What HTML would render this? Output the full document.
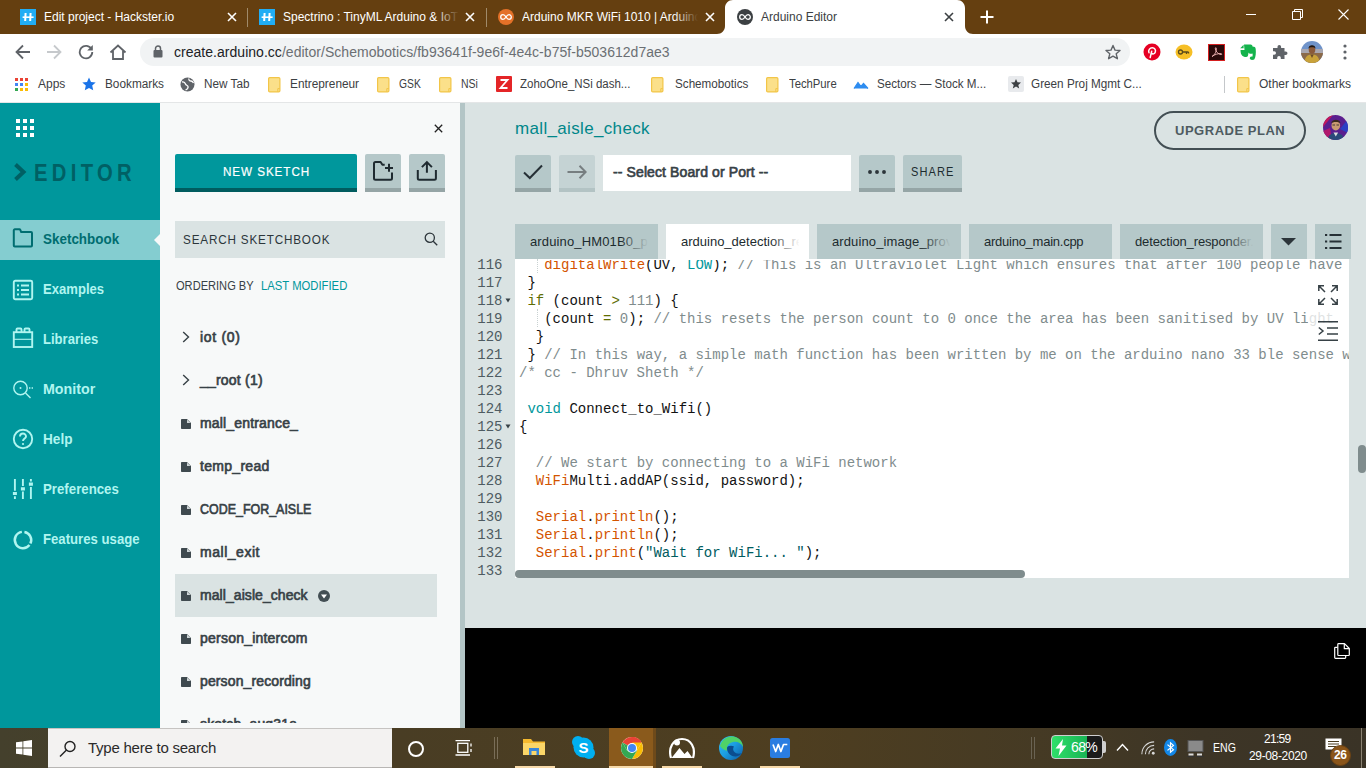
<!DOCTYPE html>
<html><head><meta charset="utf-8"><title>Arduino Editor</title>
<style>
*{box-sizing:border-box;margin:0;padding:0}
html,body{width:1366px;height:768px;overflow:hidden;background:#fff;font-family:"Liberation Sans",sans-serif;}
.a{position:absolute}
.t{position:absolute;white-space:nowrap;line-height:1}
#tabbar{left:0;top:0;width:1366px;height:34px;background:#653f10}
#toolbar{left:0;top:34px;width:1366px;height:36px;background:#fff}
#bmbar{left:0;top:70px;width:1366px;height:33px;background:#fff;border-bottom:1px solid #e4e6e7}
#page{left:0;top:103px;width:1366px;height:625px;background:#dae3e3;overflow:hidden}
#side{left:0;top:0;width:160px;height:625px;background:#00979c}
#panel{left:160px;top:0;width:300px;height:625px;background:#f7f9f9;overflow:hidden}
#split{left:460px;top:0;width:5px;height:625px;background:#b3c5c6}
#taskbar{left:0;top:728px;width:1366px;height:40px;background:linear-gradient(90deg,#44402c 0%,#493d24 29%,#4e3e20 58%,#453a24 76%,#3d3526 88%,#3a3326 100%)}
.tabtxt{font-size:12px;color:#fff;top:11px}
.bm{font-size:12px;color:#3c4043;top:78px;transform-origin:0 50%}
.nav{font-size:15px;font-weight:bold;color:#b0f5f0;transform-origin:0 50%}
.li{font-size:14px;font-weight:normal;color:#374146;-webkit-text-stroke:0.650px #374146;transform-origin:0 50%}
.btn{background:#b5c8c9;border-bottom:3px solid #95a5a6;border-radius:2px 2px 0 0}
.etab{top:121px;height:35px;background:#b5c8c9;font-size:13px;color:#1c2b2e;letter-spacing:-0.130px}
.etab .fd{position:absolute;right:0;top:0;width:30px;height:34px;background:linear-gradient(90deg,rgba(181,200,201,0),#b5c8c9 95%)}
.etab b{position:absolute;left:15px;top:0;width:120px;height:34px;overflow:hidden;font-weight:normal}
.etab span{position:absolute;left:0;top:11px;white-space:nowrap;line-height:1}
#code{left:515px;top:156px;width:834px;height:319px;background:#fff;overflow:hidden}
#gutter{left:465px;top:148px;width:50px;height:330px;overflow:hidden}
pre{font-family:"Liberation Mono",monospace;font-size:14px;line-height:18px;white-space:pre}
#gutter pre{color:#4e5b61;text-align:right;width:37.500px;position:absolute;left:0;top:5px}
#code pre{position:absolute;left:4px;top:-3px;color:#111}
.c{color:#7f8c8d}.k{color:#d35400}.b{color:#00979c}.n{color:#7f8c8d}.o{color:#5e6d03}.s{color:#005c5f}
</style></head><body>

<!-- ============ CHROME TAB BAR ============ -->
<div class="a" id="tabbar">
 <!-- tab1 -->
 <svg class="a" style="left:20px;top:9px" width="16" height="16" viewBox="0 0 16 16"><rect width="16" height="16" fill="#21adf4"/><path d="M5.600 4v8M10.600 4v8" stroke="#fff" stroke-width="2" fill="none" transform="skewX(-3) translate(0.2 0)"/><path d="M2.600 8.200h11" stroke="#fff" stroke-width="1.600"/></svg>
 <div class="t tabtxt" style="left:44px">Edit project - Hackster.io</div>
 <svg class="a" style="left:227px;top:12px" width="10" height="10" viewBox="0 0 10 10"><path d="M1 1l8 8M9 1l-8 8" stroke="#fff" stroke-width="1.6"/></svg>
 <div class="a" style="left:247px;top:8px;width:1px;height:19px;background:#a08a6a"></div>
 <!-- tab2 -->
 <svg class="a" style="left:259px;top:9px" width="16" height="16" viewBox="0 0 16 16"><rect width="16" height="16" fill="#21adf4"/><path d="M5.600 4v8M10.600 4v8" stroke="#fff" stroke-width="2" fill="none" transform="skewX(-3) translate(0.2 0)"/><path d="M2.600 8.200h11" stroke="#fff" stroke-width="1.600"/></svg>
 <div class="a" style="left:283px;top:0;width:176px;height:34px;overflow:hidden"><div class="t tabtxt" style="left:0">Spectrino : TinyML Arduino &amp; IoT</div><div class="a" style="right:0;top:0;width:24px;height:34px;background:linear-gradient(90deg,rgba(101,63,16,0),#653f10)"></div></div>
 <svg class="a" style="left:465px;top:12px" width="10" height="10" viewBox="0 0 10 10"><path d="M1 1l8 8M9 1l-8 8" stroke="#fff" stroke-width="1.6"/></svg>
 <div class="a" style="left:486px;top:8px;width:1px;height:19px;background:#a08a6a"></div>
 <!-- tab3 -->
 <svg class="a" style="left:498px;top:9px" width="16" height="16" viewBox="0 0 16 16"><circle cx="8" cy="8" r="8" fill="#e47128"/><path d="M8 8c-1-1.6-1.9-2.3-3-2.3a2.3 2.3 0 000 4.6c1.100 0 2-.7 3-2.300s1.900-2.300 3-2.300a2.300 2.300 0 010 4.600c-1.100 0-2-.7-3-2.300z" fill="none" stroke="#fff" stroke-width="1.3"/></svg>
 <div class="a" style="left:522px;top:0;width:176px;height:34px;overflow:hidden"><div class="t tabtxt" style="left:0">Arduino MKR WiFi 1010 | Arduino</div><div class="a" style="right:0;top:0;width:24px;height:34px;background:linear-gradient(90deg,rgba(101,63,16,0),#653f10)"></div></div>
 <svg class="a" style="left:705px;top:12px" width="10" height="10" viewBox="0 0 10 10"><path d="M1 1l8 8M9 1l-8 8" stroke="#fff" stroke-width="1.6"/></svg>
 <!-- active tab -->
 <svg class="a" style="left:717px;top:0" width="256" height="34" viewBox="0 0 256 34"><path d="M0 34c4.500 0 8-3.500 8-8V8c0-4.500 3.500-8 8-8h224c4.500 0 8 3.500 8 8v18c0 4.500 3.500 8 8 8z" fill="#fff"/></svg>
 <svg class="a" style="left:737px;top:9px" width="16" height="16" viewBox="0 0 16 16"><circle cx="8" cy="8" r="8" fill="#3c4043"/><path d="M8 8c-1-1.600-1.900-2.300-3-2.300a2.300 2.300 0 000 4.600c1.100 0 2-.7 3-2.300s1.900-2.300 3-2.300a2.300 2.300 0 010 4.600c-1.100 0-2-.7-3-2.300z" fill="none" stroke="#fff" stroke-width="1.300"/></svg>
 <div class="t tabtxt" style="left:761px;color:#3c4043">Arduino Editor</div>
 <svg class="a" style="left:944px;top:12px" width="10" height="10" viewBox="0 0 10 10"><path d="M1 1l8 8M9 1l-8 8" stroke="#3c4043" stroke-width="1.600"/></svg>
 <!-- new tab -->
 <svg class="a" style="left:980px;top:10px" width="14" height="14" viewBox="0 0 14 14"><path d="M7 0.500v13M0.500 7h13" stroke="#fff" stroke-width="2"/></svg>
 <!-- window controls -->
 <svg class="a" style="left:1246px;top:14px" width="10" height="2"><rect width="10" height="1" y="0" fill="#fff"/></svg>
 <svg class="a" style="left:1292px;top:9px" width="11" height="11" viewBox="0 0 11 11"><path d="M0.500 2.500h8v8h-8z M2.500 2.500v-2h8v8h-2" fill="none" stroke="#fff" stroke-width="1"/></svg>
 <svg class="a" style="left:1338px;top:9px" width="11" height="11" viewBox="0 0 11 11"><path d="M0.500 0.500l10 10M10.500 0.500l-10 10" stroke="#fff" stroke-width="1.100"/></svg>
</div>
<div class="a" id="toolbar">
 <!-- back -->
 <svg class="a" style="left:15px;top:10px" width="16" height="16" viewBox="0 0 16 16"><path d="M15 8H2M8 1.500L1.500 8 8 14.500" fill="none" stroke="#5f6368" stroke-width="1.800"/></svg>
 <svg class="a" style="left:46px;top:10px" width="16" height="16" viewBox="0 0 16 16"><path d="M1 8h13M8 1.500L14.500 8 8 14.500" fill="none" stroke="#c6c9cc" stroke-width="1.800"/></svg>
 <svg class="a" style="left:78px;top:10px" width="16" height="16" viewBox="0 0 16 16"><path d="M13.600 5.200A6.300 6.300 0 1014.300 8" fill="none" stroke="#5f6368" stroke-width="1.800"/><path d="M14.800 1v5.600H9.200z" fill="#5f6368"/></svg>
 <svg class="a" style="left:109px;top:9px" width="18" height="18" viewBox="0 0 18 18"><path d="M1.500 9.500L9 2.500l7.500 7M4 8v8h10V8" fill="none" stroke="#5f6368" stroke-width="1.800"/></svg>
 <!-- url pill -->
 <div class="a" style="left:140px;top:4px;width:990px;height:28px;border-radius:14px;background:#f1f3f4"></div>
 <svg class="a" style="left:153px;top:11px" width="10" height="13" viewBox="0 0 10 13"><rect x="0.500" y="5" width="9" height="7.500" rx="1" fill="#5f6368"/><path d="M2.500 5.500V3.500a2.500 2.500 0 015 0v2" fill="none" stroke="#5f6368" stroke-width="1.500"/></svg>
 <div class="t" style="left:174px;top:11px;font-size:14px;color:#202124;letter-spacing:0.030px">create.arduino.cc<span style="color:#6b6f73">/editor/Schemobotics/fb93641f-9e6f-4e4c-b75f-b503612d7ae3</span></div>
 <!-- star -->
 <svg class="a" style="left:1105px;top:10px" width="16" height="16" viewBox="0 0 16 16"><path d="M8 1.500l2 4.600 5 .4-3.800 3.300 1.200 4.900L8 12.100l-4.400 2.600 1.200-4.900L1 6.500l5-.4z" fill="none" stroke="#5f6368" stroke-width="1.400" stroke-linejoin="round"/></svg>
 <!-- pinterest -->
 <svg class="a" style="left:1143px;top:9px" width="18" height="18" viewBox="0 0 18 18"><circle cx="9" cy="9" r="8.500" fill="#e60023"/><path d="M7.200 14.500l1.500-6.300M6 9.800c-1.200-2.600.8-5 3.300-5 2.400 0 3.700 2 3 4.200-.6 2-2.700 2.600-3.700 1.200" fill="none" stroke="#fff" stroke-width="1.500" stroke-linecap="round"/></svg>
 <!-- key ext -->
 <svg class="a" style="left:1175px;top:10px" width="18" height="16" viewBox="0 0 18 16"><ellipse cx="9" cy="8" rx="8.500" ry="7.500" fill="#f6bf26"/><circle cx="5.500" cy="8" r="2" fill="none" stroke="#5a4a1a" stroke-width="1.300"/><path d="M7.500 8h6M11.500 8v2M13.500 8v1.500" stroke="#5a4a1a" stroke-width="1.300"/></svg>
 <!-- adobe -->
 <svg class="a" style="left:1208px;top:10px" width="17" height="17" viewBox="0 0 17 17"><rect x="0.500" y="0.500" width="16" height="16" fill="#2a0a0a" stroke="#d51f1f" stroke-width="1"/><path d="M4 12.500c3-1.500 4.800-5.500 4.300-8.300-.2-.9-1.200-.6-1 .6.500 2.800 3 5.500 5.700 5.800 1 .1 1-.9 0-1-3-.2-6.500 1-9 2.900z" fill="none" stroke="#f4b8b8" stroke-width="0.900"/></svg>
 <!-- evernote -->
 <svg class="a" style="left:1239px;top:8px" width="18" height="20" viewBox="0 0 18 20"><path d="M5 2.500h6.500c1.500 0 2 1 2 2 2 .2 3 .6 3.200 2.500.4 4 0 8-1.200 10-.8 1.200-3.500 1.200-4.500 0-.6-.9 0-2.500 1.500-2.500h1c.2-1.500.2-2 0-3-2 .800-3.500.2-4-1-.4 3-.5 4.500-2.500 4.500-2.500 0-5.500-1-5.500-7h4z" fill="#14b34c"/><path d="M4.600 2.800L1.200 6.200h3.400z" fill="#14b34c"/></svg>
 <!-- puzzle -->
 <svg class="a" style="left:1271px;top:10px" width="17" height="17" viewBox="0 0 17 17"><path d="M6.500 2.800a1.800 1.800 0 013.600 0V4h3.400v3.400h1.200a1.800 1.800 0 010 3.600h-1.200V15H9.800v-1.200a1.800 1.800 0 00-3.600 0V15H2v-4.200h1.200a1.800 1.800 0 000-3.600H2V4h4.500z" fill="#5f6368"/></svg>
 <!-- avatar -->
 <svg class="a" style="left:1301px;top:7px" width="22" height="22" viewBox="0 0 22 22"><defs><clipPath id="av1"><circle cx="11" cy="11" r="11"/></clipPath></defs><g clip-path="url(#av1)"><rect width="22" height="22" fill="#6f93c9"/><rect x="0" y="8" width="22" height="6" fill="#a9a7b0"/><rect x="0" y="12" width="22" height="10" fill="#8b6a4a"/><path d="M3.500 22c0-6 3-8.500 7.500-8.500s7.500 2.500 7.500 8.500z" fill="#c9a23a"/><path d="M9.200 13.500l1.800 3.500 1.800-3.500z" fill="#6a4a2a"/><ellipse cx="11" cy="8.800" rx="3.300" ry="4" fill="#8a5a3a"/><path d="M7.500 7.500c-.3-4.500 7.300-4.500 7 0-.8-1.600-6.200-1.600-7 0z" fill="#1e1612"/></g></svg>
 <!-- menu -->
 <svg class="a" style="left:1343px;top:10px" width="4" height="16" viewBox="0 0 4 16"><circle cx="2" cy="2" r="1.600" fill="#5f6368"/><circle cx="2" cy="8" r="1.600" fill="#5f6368"/><circle cx="2" cy="14" r="1.600" fill="#5f6368"/></svg>
</div>
<div class="a" id="bmbar"></div>
<!-- bookmarks -->
<svg class="a" style="left:15px;top:78px" width="14" height="14" viewBox="0 0 14 14"><g><rect x="0" y="0" width="3" height="3" fill="#ea4335"/><rect x="5" y="0" width="3" height="3" fill="#ea4335"/><rect x="10" y="0" width="3" height="3" fill="#ea4335"/><rect x="0" y="5" width="3" height="3" fill="#4285f4"/><rect x="5" y="5" width="3" height="3" fill="#4285f4"/><rect x="10" y="5" width="3" height="3" fill="#fbbc04"/><rect x="0" y="10" width="3" height="3" fill="#34a853"/><rect x="5" y="10" width="3" height="3" fill="#fbbc04"/><rect x="10" y="10" width="3" height="3" fill="#fbbc04"/></g></svg>
<div class="t bm" style="left:38px">Apps</div>
<svg class="a" style="left:82px;top:77px" width="14" height="14" viewBox="0 0 14 14"><path d="M7 0.500l2 4.400 4.700.5-3.500 3.200 1 4.700L7 10.900l-4.200 2.400 1-4.700L.3 5.400 5 4.900z" fill="#1a73e8"/></svg>
<div class="t bm" style="left:105px;transform:scaleX(0.983)">Bookmarks</div>
<svg class="a" style="left:180px;top:77px" width="15" height="15" viewBox="0 0 15 15"><circle cx="7.500" cy="7.500" r="7" fill="#5f6368"/><path d="M2 5c2-.5 3 .5 3.500 2s2 1 2.500 2.500-1 3-2.500 3.500M9 1.500c-.5 1.500.5 2.500 2 2.500s2 1 2.500 2" fill="none" stroke="#fff" stroke-width="1.300"/></svg>
<div class="t bm" style="left:204px;transform:scaleX(0.978)">New Tab</div>
<svg class="a" style="left:268px;top:77px" width="13" height="16" viewBox="0 0 13 16"><rect x="0.600" y="0.600" width="11.300" height="14.300" rx="1.200" fill="#fbe08a" stroke="#f2c548" stroke-width="1.200"/><path d="M9.800 14.800v-3.200h2" fill="none" stroke="#f2c548" stroke-width="1"/></svg><div class="t bm" style="left:290px;transform:scaleX(0.986)">Entrepreneur</div>
<svg class="a" style="left:377px;top:77px" width="13" height="16" viewBox="0 0 13 16"><rect x="0.600" y="0.600" width="11.300" height="14.300" rx="1.200" fill="#fbe08a" stroke="#f2c548" stroke-width="1.200"/><path d="M9.800 14.800v-3.200h2" fill="none" stroke="#f2c548" stroke-width="1"/></svg><div class="t bm" style="left:399px;transform:scaleX(0.860)">GSK</div>
<svg class="a" style="left:439px;top:77px" width="13" height="16" viewBox="0 0 13 16"><rect x="0.600" y="0.600" width="11.300" height="14.300" rx="1.200" fill="#fbe08a" stroke="#f2c548" stroke-width="1.200"/><path d="M9.800 14.800v-3.200h2" fill="none" stroke="#f2c548" stroke-width="1"/></svg><div class="t bm" style="left:461px;transform:scaleX(0.875)">NSi</div>
<svg class="a" style="left:496px;top:76px" width="16" height="16" viewBox="0 0 16 16"><rect width="16" height="16" rx="1" fill="#e42527"/><path d="M4.500 4h7L4.500 12h7" fill="none" stroke="#fff" stroke-width="1.800"/></svg>
<div class="t bm" style="left:520px;transform:scaleX(0.957)">ZohoOne_NSi dash...</div>
<svg class="a" style="left:651px;top:77px" width="13" height="16" viewBox="0 0 13 16"><rect x="0.600" y="0.600" width="11.300" height="14.300" rx="1.200" fill="#fbe08a" stroke="#f2c548" stroke-width="1.200"/><path d="M9.800 14.800v-3.200h2" fill="none" stroke="#f2c548" stroke-width="1"/></svg><div class="t bm" style="left:675px;transform:scaleX(0.973)">Schemobotics</div>
<svg class="a" style="left:766px;top:77px" width="13" height="16" viewBox="0 0 13 16"><rect x="0.600" y="0.600" width="11.300" height="14.300" rx="1.200" fill="#fbe08a" stroke="#f2c548" stroke-width="1.200"/><path d="M9.800 14.800v-3.200h2" fill="none" stroke="#f2c548" stroke-width="1"/></svg><div class="t bm" style="left:789px;transform:scaleX(0.940)">TechPure</div>
<svg class="a" style="left:853px;top:79px" width="16" height="11" viewBox="0 0 16 11"><path d="M1 9.500l4-6 3 4 2.500-3 4.500 5z" fill="#2d8cf0"/><path d="M1 9.500l4-6 3 4 2.500-3 4.500 5" fill="none" stroke="#2d8cf0" stroke-width="1.200"/></svg>
<div class="t bm" style="left:877px;transform:scaleX(0.969)">Sectors &mdash; Stock M...</div>
<svg class="a" style="left:1008px;top:76px" width="16" height="16" viewBox="0 0 16 16"><rect width="16" height="16" rx="2" fill="#e8eaed"/><path d="M8 3l1.500 3.300 3.500.3-2.700 2.300.9 3.500L8 10.500l-3.200 1.900.9-3.500L3 6.600l3.500-.3z" fill="#3c4043"/></svg>
<div class="t bm" style="left:1031px;transform:scaleX(0.978)">Green Proj Mgmt C...</div>
<div class="a" style="left:1224px;top:76px;width:1px;height:17px;background:#c4c7ca"></div>
<svg class="a" style="left:1237px;top:77px" width="13" height="16" viewBox="0 0 13 16"><rect x="0.600" y="0.600" width="11.300" height="14.300" rx="1.200" fill="#fbe08a" stroke="#f2c548" stroke-width="1.200"/><path d="M9.800 14.800v-3.200h2" fill="none" stroke="#f2c548" stroke-width="1"/></svg><div class="t bm" style="left:1259px">Other bookmarks</div>


<!-- ============ PAGE ============ -->
<div class="a" id="page">
 <div class="a" id="side">
  <!-- grid -->
  <svg class="a" style="left:16px;top:16px" width="18" height="18" viewBox="0 0 18 18" fill="#fff"><rect x="0" y="0" width="4" height="4"/><rect x="7" y="0" width="4" height="4"/><rect x="14" y="0" width="4" height="4"/><rect x="0" y="7" width="4" height="4"/><rect x="7" y="7" width="4" height="4"/><rect x="14" y="7" width="4" height="4"/><rect x="0" y="14" width="4" height="4"/><rect x="7" y="14" width="4" height="4"/><rect x="14" y="14" width="4" height="4"/></svg>
  <!-- logo -->
  <svg class="a" style="left:14px;top:60px" width="13" height="18" viewBox="0 0 13 18"><path d="M1.500 1.500L9.500 9 1.500 16.500" fill="none" stroke="#006064" stroke-width="4"/></svg>
  <div class="t" id="logo" style="left:34px;top:59px;font-size:23.500px;font-weight:bold;color:#006064;letter-spacing:5.050px;transform:scaleX(0.860);transform-origin:0 50%">EDITOR</div>
  <!-- selected -->
  <div class="a" style="left:0;top:117px;width:160px;height:40px;background:#84cdd0"></div>
  <svg class="a" style="left:154px;top:131px" width="6" height="12" viewBox="0 0 6 12"><path d="M6 0L0 6l6 6z" fill="#f7f9f9"/></svg>
  <svg class="a" style="left:12px;top:124px" width="22" height="22" viewBox="0 0 22 22"><path d="M2.800 2.300h4.600a1 1 0 01.9.6l.9 2.200h9.800a1 1 0 011 1v12.400a1 1 0 01-1 1H2.800a1 1 0 01-1-1V3.300a1 1 0 011-1z" fill="none" stroke="#006d70" stroke-width="2" stroke-linejoin="round"/></svg>
  <div class="t nav" id="n1" style="left:43px;top:128px;color:#006d70;transform:scaleX(0.896)">Sketchbook</div>
  <!-- examples -->
  <svg class="a" style="left:12px;top:176px" width="22" height="22" viewBox="0 0 22 22"><rect x="1.800" y="1.800" width="18.400" height="18.400" rx="1.500" fill="none" stroke="#b0f5f0" stroke-width="1.900"/><path d="M9 6.500h8M9 11h8M9 15.500h8" stroke="#b0f5f0" stroke-width="1.900"/><path d="M5 6.500h2M5 11h2M5 15.500h2" stroke="#b0f5f0" stroke-width="1.800"/></svg>
  <div class="t nav" id="n2" style="left:43px;top:178px;transform:scaleX(0.872)">Examples</div>
  <!-- libraries -->
  <svg class="a" style="left:12px;top:223px" width="22" height="24" viewBox="0 0 22 24"><rect x="1.800" y="6.200" width="18.400" height="14.800" fill="none" stroke="#b0f5f0" stroke-width="1.900"/><path d="M4.500 6V3.500a1 1 0 011-1h3a1 1 0 011 1V6M12.500 6V3.500a1 1 0 011-1h3a1 1 0 011 1V6" fill="none" stroke="#b0f5f0" stroke-width="1.900"/><path d="M2 13.300h18" stroke="#b0f5f0" stroke-width="1.100"/></svg>
  <div class="t nav" id="n3" style="left:43px;top:228px;transform:scaleX(0.871)">Libraries</div>
  <!-- monitor -->
  <svg class="a" style="left:12px;top:276px" width="24" height="24" viewBox="0 0 24 24"><circle cx="8.500" cy="9" r="6.700" fill="none" stroke="#b0f5f0" stroke-width="1.400"/><path d="M13.500 14l5 5" stroke="#b0f5f0" stroke-width="1.400"/><circle cx="8.500" cy="9" r="1" fill="#b0f5f0"/><path d="M17 9h1.400M19.600 9H21" stroke="#b0f5f0" stroke-width="1.400"/></svg>
  <div class="t nav" id="n4" style="left:43px;top:278px;transform:scaleX(0.950)">Monitor</div>
  <!-- help -->
  <svg class="a" style="left:12px;top:325px" width="22" height="22" viewBox="0 0 22 22"><circle cx="11" cy="11" r="9.200" fill="none" stroke="#b0f5f0" stroke-width="1.900"/><path d="M8 8.500a3 3 0 116 0c0 2-3 2.200-3 4.500" fill="none" stroke="#b0f5f0" stroke-width="1.900"/><circle cx="11" cy="16" r="1.100" fill="#b0f5f0"/></svg>
  <div class="t nav" id="n5" style="left:43px;top:328px;transform:scaleX(0.909)">Help</div>
  <!-- preferences -->
  <svg class="a" style="left:12px;top:375px" width="22" height="22" viewBox="0 0 22 22" fill="none" stroke="#b0f5f0" stroke-width="1.900"><path d="M2.900 1v11.800M2.900 18.200v2.700M10.900 1v7M10.900 13.600v7.300M18.900 1v2.400M18.900 9v11.900"/><path d="M2.900 13.900v3.200M10.900 9.200v3.200M18.900 4.600v3.200" stroke-width="4" stroke-linecap="butt"/></svg>
  <div class="t nav" id="n6" style="left:43px;top:378px;transform:scaleX(0.883)">Preferences</div>
  <!-- features -->
  <svg class="a" style="left:12px;top:426px" width="22" height="22" viewBox="0 0 22 22" fill="none" stroke="#b0f5f0" stroke-width="2.500"><path d="M12.420 2.920A8.200 8.200 0 0118.430 14.470M17.460 16.050A8.200 8.200 0 119.860 2.880"/></svg>
  <div class="t nav" id="n7" style="left:43px;top:428px;transform:scaleX(0.878)">Features usage</div>
 </div>
 <div class="a" id="panel">
  <!-- close -->
  <svg class="a" style="left:274px;top:21px" width="9" height="9" viewBox="0 0 9 9"><path d="M0.800 0.800l7.400 7.400M8.200 0.800L0.800 8.200" stroke="#222" stroke-width="1.300"/></svg>
  <!-- new sketch -->
  <div class="a" style="left:15px;top:51px;width:182px;height:38px;background:#00979c;border-bottom:4px solid #005c5f;border-radius:2px 2px 0 0"></div>
  <div class="t" id="newsk" style="left:63px;top:62px;font-size:13px;color:#fff;font-weight:normal;-webkit-text-stroke:0.200px #fff;letter-spacing:1.012px;transform:scaleX(0.900);transform-origin:0 50%">NEW SKETCH</div>
  <div class="a btn" style="left:205px;top:51px;width:36px;height:38px;border-bottom-width:4px;border-radius:2px 2px 0 0"></div>
  <svg class="a" style="left:212px;top:57px" width="22" height="22" viewBox="0 0 22 22" fill="none" stroke="#1f2a30" stroke-width="2"><path d="M12.700 4.800H10.400L8.600 2H3.500A1.500 1.500 0 002 3.500V18.300A1.500 1.500 0 003.500 19.800H18.500A1.500 1.500 0 0020 18.300V12.400" stroke-linejoin="round"/><path d="M17 3.800V11.800M13 7.900H21"/></svg>
  <div class="a btn" style="left:249px;top:51px;width:36px;height:38px;border-bottom-width:4px;border-radius:2px 2px 0 0"></div>
  <svg class="a" style="left:256px;top:57px" width="22" height="22" viewBox="0 0 22 22" fill="none" stroke="#1f2a30" stroke-width="2"><path d="M1.800 10.100V18.300A1.500 1.500 0 003.300 19.800H18.400A1.500 1.500 0 0019.900 18.300V10.100M10.900 12.700V2.500M5.900 7.100L10.900 2.100L15.900 7.100"/></svg>
  <!-- search -->
  <div class="a" style="left:15px;top:118px;width:270px;height:37px;background:#dae3e3"></div>
  <div class="t" id="srch" style="left:23px;top:130px;font-size:13px;color:#2c363b;letter-spacing:0.920px;transform:scaleX(0.900);transform-origin:0 50%">SEARCH SKETCHBOOK</div>
  <svg class="a" style="left:264px;top:129px" width="14" height="14" viewBox="0 0 14 14"><circle cx="5.800" cy="5.800" r="4.600" fill="none" stroke="#2c353a" stroke-width="1.300"/><path d="M9.200 9.200l4 4" stroke="#2c353a" stroke-width="1.300"/></svg>
  <!-- ordering -->
  <div class="t" id="ord1" style="left:16px;top:177px;font-size:12px;color:#374146;transform:scaleX(0.924);transform-origin:0 50%">ORDERING BY</div>
  <div class="t" id="ord2" style="left:101px;top:177px;font-size:12px;color:#00979c;transform:scaleX(0.940);transform-origin:0 50%">LAST MODIFIED</div>
  <!-- folders -->
  <svg class="a" style="left:22px;top:228px" width="8" height="12" viewBox="0 0 8 12"><path d="M1.200 1l5.300 5-5.300 5" fill="none" stroke="#374146" stroke-width="1.400"/></svg><div class="t li" id="d1" style="left:40px;top:227px;letter-spacing:0.700px">iot (0)</div>
  <svg class="a" style="left:22px;top:271px" width="8" height="12" viewBox="0 0 8 12"><path d="M1.200 1l5.300 5-5.300 5" fill="none" stroke="#374146" stroke-width="1.400"/></svg><div class="t li" id="d2" style="left:40px;top:270px;letter-spacing:0.211px">__root (1)</div>
  <!-- selected row -->
  <div class="a" style="left:15px;top:471px;width:262px;height:43px;background:#dae3e3"></div>
  <div class="a" id="flist" style="left:0;top:0;width:300px;height:620px;overflow:hidden">
  <svg class="a" style="left:21px;top:316px" width="10" height="10" viewBox="0 0 10 10"><path d="M0.800 0H6L10 4V9.200a.8.800 0 01-.8.800H.8a.8.800 0 01-.8-.8V.8A.8.800 0 01.8 0z" fill="#3f4a4f"/><path d="M6 0.400V4H9.600z" fill="#cfd6d8"/></svg><div class="t li" id="f1" style="left:40px;top:313px;letter-spacing:0.167px">mall_entrance_</div>
  <svg class="a" style="left:21px;top:359px" width="10" height="10" viewBox="0 0 10 10"><path d="M0.800 0H6L10 4V9.200a.8.800 0 01-.8.800H.8a.8.800 0 01-.8-.8V.8A.8.800 0 01.8 0z" fill="#3f4a4f"/><path d="M6 0.400V4H9.600z" fill="#cfd6d8"/></svg><div class="t li" id="f2" style="left:40px;top:356px;letter-spacing:0.295px">temp_read</div>
  <svg class="a" style="left:21px;top:402px" width="10" height="10" viewBox="0 0 10 10"><path d="M0.800 0H6L10 4V9.200a.8.800 0 01-.8.800H.8a.8.800 0 01-.8-.8V.8A.8.800 0 01.8 0z" fill="#3f4a4f"/><path d="M6 0.400V4H9.600z" fill="#cfd6d8"/></svg><div class="t li" id="f3" style="left:40px;top:399px;transform:scaleX(0.889)">CODE_FOR_AISLE</div>
  <svg class="a" style="left:21px;top:445px" width="10" height="10" viewBox="0 0 10 10"><path d="M0.800 0H6L10 4V9.200a.8.800 0 01-.8.800H.8a.8.800 0 01-.8-.8V.8A.8.800 0 01.8 0z" fill="#3f4a4f"/><path d="M6 0.400V4H9.600z" fill="#cfd6d8"/></svg><div class="t li" id="f4" style="left:40px;top:442px;letter-spacing:0.531px">mall_exit</div>
  <svg class="a" style="left:21px;top:488px" width="10" height="10" viewBox="0 0 10 10"><path d="M0.800 0H6L10 4V9.200a.8.800 0 01-.8.800H.8a.8.800 0 01-.8-.8V.8A.8.800 0 01.8 0z" fill="#3f4a4f"/><path d="M6 0.400V4H9.600z" fill="#cfd6d8"/></svg><div class="t li" id="f5" style="left:40px;top:485px;letter-spacing:0.067px">mall_aisle_check</div>
  <svg class="a" style="left:21px;top:531px" width="10" height="10" viewBox="0 0 10 10"><path d="M0.800 0H6L10 4V9.200a.8.800 0 01-.8.800H.8a.8.800 0 01-.8-.8V.8A.8.800 0 01.8 0z" fill="#3f4a4f"/><path d="M6 0.400V4H9.600z" fill="#cfd6d8"/></svg><div class="t li" id="f6" style="left:40px;top:528px;letter-spacing:0.223px">person_intercom</div>
  <svg class="a" style="left:21px;top:574px" width="10" height="10" viewBox="0 0 10 10"><path d="M0.800 0H6L10 4V9.200a.8.800 0 01-.8.800H.8a.8.800 0 01-.8-.8V.8A.8.800 0 01.8 0z" fill="#3f4a4f"/><path d="M6 0.400V4H9.600z" fill="#cfd6d8"/></svg><div class="t li" id="f7" style="left:40px;top:571px;letter-spacing:0.122px">person_recording</div>
  <svg class="a" style="left:21px;top:617px" width="10" height="10" viewBox="0 0 10 10"><path d="M0.800 0H6L10 4V9.200a.8.800 0 01-.8.800H.8a.8.800 0 01-.8-.8V.8A.8.800 0 01.8 0z" fill="#3f4a4f"/><path d="M6 0.400V4H9.600z" fill="#cfd6d8"/></svg><div class="t li" id="f8" style="left:40px;top:614px;letter-spacing:0.169px">sketch_aug31a</div>
  </div>
  <svg class="a" style="left:158px;top:487px" width="12" height="12" viewBox="0 0 12 12"><circle cx="6" cy="6" r="6" fill="#434f54"/><path d="M3 4.500h6L6 8.500z" fill="#fff"/></svg>
 </div>
 <div class="a" id="split"></div>
 <!-- header -->
 <div class="t" id="title" style="left:515px;top:17px;font-size:17px;color:#00878a;letter-spacing:0.340px">mall_aisle_check</div>
 <div class="a" style="left:1154px;top:8px;width:152px;height:39px;border:2px solid #434f54;border-radius:20px"></div>
 <div class="t" id="upg" style="left:1175px;top:21px;font-size:13px;font-weight:bold;color:#4e5b61;letter-spacing:0.520px">UPGRADE PLAN</div>
 <svg class="a" style="left:1323px;top:12px" width="25" height="25" viewBox="0 0 25 25"><defs><clipPath id="av2"><circle cx="12.500" cy="12.500" r="12.500"/></clipPath></defs><g clip-path="url(#av2)"><rect width="25" height="25" fill="#5a1f8f"/><path d="M0 0h10L0 12z" fill="#c2185b"/><path d="M25 4v14l-8-4z" fill="#2b3fc4"/><path d="M0 16l7-3 2 12H0z" fill="#b0186c"/><path d="M17 0h8v6z" fill="#e0307a"/><ellipse cx="12.800" cy="10.500" rx="4.300" ry="5" fill="#c89a72"/><path d="M8.200 8.500c0-5 9.300-5 9.300 0-1-2-8.300-2-9.300 0z" fill="#3a2a1e"/><path d="M5 25c0-5 3-7 7.800-7s7.800 2 7.800 7z" fill="#2a4a7a"/><path d="M10.500 17.500l2.300 4 2.300-4z" fill="#ddd"/><path d="M9.500 10h2.500M13.500 10H16" stroke="#222" stroke-width="0.800"/></g></svg>
 <!-- toolbar buttons -->
 <div class="a btn" style="left:515px;top:52px;width:36px;height:37px;border-bottom-width:4px"></div>
 <svg class="a" style="left:523px;top:61px" width="20" height="16" viewBox="0 0 20 16"><path d="M1 8.500l5.800 5.500L19 1.500" fill="none" stroke="#263036" stroke-width="2"/></svg>
 <div class="a" style="left:559px;top:52px;width:36px;height:37px;background:#c5d3d4;border-bottom:4px solid #b3c3c4;border-radius:2px 2px 0 0"></div>
 <svg class="a" style="left:567px;top:62px" width="20" height="14" viewBox="0 0 20 14"><path d="M0.500 7h18M12.500 0.800l6.200 6.200-6.200 6.200" fill="none" stroke="#777e80" stroke-width="2"/></svg>
 <div class="a" style="left:603px;top:52px;width:248px;height:36px;background:#fff"></div>
 <div class="t" id="sel" style="left:613px;top:62px;font-size:14px;font-weight:normal;-webkit-text-stroke:0.650px #374146;letter-spacing:0.110px;color:#374146">-- Select Board or Port --</div>
 <div class="a btn" style="left:859px;top:52px;width:36px;height:37px;border-bottom-width:4px"></div>
 <svg class="a" style="left:868px;top:67px" width="18" height="4" viewBox="0 0 18 4" fill="#2c353a"><circle cx="2" cy="2" r="1.950"/><circle cx="9" cy="2" r="1.950"/><circle cx="16" cy="2" r="1.950"/></svg>
 <div class="a btn" style="left:903px;top:52px;width:59px;height:37px;border-bottom-width:4px"></div>
 <div class="t" id="share" style="left:911px;top:62px;font-size:13px;color:#1c2b2e;letter-spacing:1.240px;transform:scaleX(0.850);transform-origin:0 50%">SHARE</div>
 <!-- editor tabs -->
 <div class="a etab" style="left:515px;width:143px"><b><span id="t1" style="letter-spacing:0.140px">arduino_HM01B0_pla</span><i class="fd"></i></b></div>
 <div class="a etab" style="left:666px;width:143px;background:#fff;height:36px"><b><span id="t2" style="letter-spacing:0">arduino_detection_re</span><i class="fd" style="background:linear-gradient(90deg,rgba(255,255,255,0),#fff 95%)"></i></b></div>
 <div class="a etab" style="left:817px;width:144px"><b><span id="t3" style="letter-spacing:0.110px">arduino_image_provi</span><i class="fd"></i></b></div>
 <div class="a etab" style="left:969px;width:143px"><b><span id="t4" style="letter-spacing:-0.250px">arduino_main.cpp</span></b></div>
 <div class="a etab" style="left:1120px;width:143px"><b><span id="t5">detection_responder.</span><i class="fd"></i></b></div>
 <div class="a etab" style="left:1271px;width:36px"></div>
 <svg class="a" style="left:1281px;top:135px" width="15" height="8" viewBox="0 0 15 8"><path d="M0 0h15L7.500 7.500z" fill="#2c353a"/></svg>
 <div class="a etab" style="left:1315px;width:36px"></div>
 <svg class="a" style="left:1325px;top:130px" width="17" height="17" viewBox="0 0 17 17"><path d="M4.500 2h12M4.500 8.500h12M4.500 15h12" stroke="#263036" stroke-width="1.900"/><path d="M0 2h2.200M0 8.500h2.200M0 15h2.200" stroke="#263036" stroke-width="2"/></svg>

 <div class="a" id="gutter"><pre>116
117
118
119
120
121
122
123
124
125
126
127
128
129
130
131
132
133</pre></div>
 <div class="a" id="code"><pre>   <span class="k">digitalWrite</span>(UV, <span class="b">LOW</span>); <span class="c">// This is an Ultraviolet Light which ensures that after 100 people have</span>
 }
 <span class="o">if</span> (count <span class="o">&gt;</span> <span class="n">111</span>) {
   (count <span class="o">=</span> <span class="n">0</span>); <span class="c">// this resets the person count to 0 once the area has been sanitised by UV light</span>
  }
 } <span class="c">// In this way, a simple math function has been written by me on the arduino nano 33 ble sense w</span>
<span class="c">/* cc - Dhruv Sheth */</span>

 <span class="b">void</span> Connect_to_Wifi()
{

  <span class="c">// We start by connecting to a WiFi network</span>
  <span class="k">WiFi</span>Multi.addAP(ssid, password);

  <span class="k">Serial</span>.<span class="k">println</span>();
  <span class="k">Serial</span>.<span class="k">println</span>();
  <span class="k">Serial</span>.<span class="k">print</span>(<span class="s">"Wait for WiFi... "</span>);
</pre>
  <div class="a" style="left:0;top:0;width:834px;height:1px;background:#fff"></div>
  <!-- indent guides -->
  <div class="a" style="left:22px;top:0;width:0;height:14px;border-left:1px dotted #c9d2d2"></div>
  <div class="a" style="left:22px;top:50px;width:0;height:18px;border-left:1px dotted #c9d2d2"></div>
  <!-- overlay icons -->
  <div class="a" style="left:793px;top:20px;width:41px;height:70px;background:rgba(255,255,255,0.750)"></div>
  <svg class="a" style="left:803px;top:26px" width="20" height="20" viewBox="0 0 20 20" fill="none" stroke="#374146" stroke-width="1.500"><path d="M0.800 6V0.800H6M0.800 0.800L7 7M14 0.800h5.200V6M19.200 0.800L13 7M0.800 14v5.200H6M0.800 19.200L7 13M14 19.200h5.200V14M19.200 19.200L13 13"/></svg>
  <svg class="a" style="left:803px;top:62px" width="20" height="20" viewBox="0 0 20 20" fill="none" stroke="#374146" stroke-width="1.500"><path d="M0 0.800h20M9 7h11M9 13h11M0 19.200h20M0.800 6.500L5 10 0.800 13.500"/></svg>
  <!-- h scrollbar -->
  <div class="a" style="left:0;top:311px;width:510px;height:8px;border-radius:4px;background:#7f8c8d"></div>
 </div>
 <!-- v scrollbar thumb -->
 <div class="a" style="left:1358px;top:342px;width:8px;height:28px;border-radius:4px;background:#7f8c8d"></div>
 <!-- fold markers -->
 <svg class="a" style="left:505px;top:195px" width="6" height="5" viewBox="0 0 6 5"><path d="M0.500 0.500h5L3 4.500z" fill="#374146"/></svg>
 <svg class="a" style="left:505px;top:321px" width="6" height="5" viewBox="0 0 6 5"><path d="M0.500 0.500h5L3 4.500z" fill="#374146"/></svg>
 <div class="a" id="console" style="left:465px;top:525px;width:901px;height:100px;background:#000"></div>
 <svg class="a" style="left:1334px;top:540px" width="16" height="16" viewBox="0 0 16 16" fill="none" stroke="#fff" stroke-width="1.200" stroke-linejoin="round"><path d="M4.600 0.700h5.900l4.800 4.800v6.200a.8.800 0 01-.8.800H4.600a.8.800 0 01-.8-.8V1.500a.8.800 0 01.8-.8z"/><path d="M10.300 0.900v4.800h4.800"/><path d="M3.600 4.300H1.500a.8.800 0 00-.8.800v9.400a.8.800 0 00.8.800h9.400a.8.800 0 00.8-.8v-1.800"/></svg>
</div>

<!-- ============ TASKBAR ============ -->
<div class="a" id="taskbar">
 <!-- start -->
 <svg class="a" style="left:16px;top:12px" width="16" height="16" viewBox="0 0 16 16" fill="#fff"><path d="M0 2.300l6.500-.9v6.200H0zM7.300 1.300L16 0v7.600H7.300zM0 8.400h6.500v6.200L0 13.700zM7.300 8.400H16V16l-8.700-1.200z"/></svg>
 <!-- search -->
 <div class="a" style="left:48px;top:0;width:344px;height:40px;background:#f3f2f1;border-top:1px solid #c6c4c2;border-bottom:1px solid #b8b6b4"></div>
 <svg class="a" style="left:59px;top:12px" width="18" height="18" viewBox="0 0 18 18"><circle cx="11" cy="6.500" r="5" fill="none" stroke="#222" stroke-width="1.400"/><path d="M7.500 10L1 16.500" stroke="#222" stroke-width="1.400"/></svg>
 <div class="t" id="tsearch" style="left:88px;top:12px;font-size:15px;color:#2b2b2b;letter-spacing:-0.240px">Type here to search</div>
 <!-- cortana -->
 <svg class="a" style="left:407px;top:12px" width="18" height="18" viewBox="0 0 18 18"><circle cx="9" cy="9" r="7" fill="none" stroke="#fff" stroke-width="2"/></svg>
 <!-- task view -->
 <svg class="a" style="left:455px;top:11px" width="18" height="18" viewBox="0 0 18 18" fill="none" stroke="#fff" stroke-width="1.300"><rect x="2.800" y="4.300" width="10" height="9"/><path d="M0.500 1.600h14.500M0.500 16h14.500M16 4.500v3M16 10v3"/></svg>
 <div class="a" style="left:494px;top:9px;width:1px;height:22px;background:#7a6e58"></div>
 <div class="a" style="left:497px;top:9px;width:1px;height:22px;background:#7a6e58"></div>
 <!-- explorer -->
 <svg class="a" style="left:522px;top:9px" width="24" height="20" viewBox="0 0 24 20"><path d="M1 2h8l2 2.500h12V18H1z" fill="#f5b92e"/><path d="M1 6h22v12H1z" fill="#fbd668"/><path d="M7 11h10v7H7z" fill="#3a86d8"/><path d="M9.500 14h5v4h-5z" fill="#fbd668"/></svg>
 <div class="a" style="left:515px;top:38px;width:40px;height:2px;background:#f7d9a8"></div>
 <!-- skype -->
 <svg class="a" style="left:571px;top:7px" width="25" height="25" viewBox="0 0 25 25"><circle cx="12.500" cy="12.500" r="10" fill="#00aff0"/><circle cx="7" cy="7" r="6" fill="#00aff0"/><circle cx="18" cy="18" r="6" fill="#00aff0"/><text x="12.500" y="18" font-family="Liberation Sans" font-weight="bold" font-size="15" fill="#fff" text-anchor="middle">S</text></svg>
 <!-- chrome (active) -->
 <div class="a" style="left:609px;top:0;width:44px;height:40px;background:#8a5a1c"></div>
 <div class="a" style="left:653px;top:0;width:3px;height:40px;background:#6e4a1a"></div>
 <div class="a" style="left:609px;top:38px;width:44px;height:2px;background:#f7d9a8"></div>
 <svg class="a" style="left:620px;top:8px" width="24" height="24" viewBox="0 0 24 24"><circle cx="12" cy="12" r="11" fill="#fff"/><path d="M12 12L2.500 6.500A11 11 0 0121.500 6.500z" fill="#ea4335"/><path d="M12 1A11 11 0 0121.500 6.500H12z" fill="#ea4335"/><path d="M21.500 6.500A11 11 0 0112 23l5-8.500z" fill="#fbbc04"/><path d="M21.500 6.500H12l5 8z" fill="#fbbc04"/><path d="M2.500 6.500A11 11 0 0012 23l5-8.500H7z" fill="#34a853"/><path d="M2.500 6.500L7 14.500l5-2.500z" fill="#34a853"/><circle cx="12" cy="12" r="5" fill="#fff"/><circle cx="12" cy="12" r="4" fill="#4285f4"/></svg>
 <!-- photos-like -->
 <svg class="a" style="left:669px;top:8px" width="26" height="24" viewBox="0 0 26 24"><path d="M2 22C-1 12 4 3 13 3s14 9 11 19" fill="none" stroke="#fff" stroke-width="2.200"/><path d="M2.500 22l8-10 5 6 3-3 5 7z" fill="#fff"/><circle cx="8" cy="6.500" r="3" fill="#fff"/></svg>
 <div class="a" style="left:662px;top:38px;width:40px;height:2px;background:#f7d9a8"></div>
 <!-- edge -->
 <svg class="a" style="left:718px;top:7px" width="26" height="26" viewBox="0 0 26 26"><defs><linearGradient id="eg" x1="0" y1="0" x2="1" y2="1"><stop offset="0" stop-color="#35c1f1"/><stop offset="0.500" stop-color="#1b9de2"/><stop offset="1" stop-color="#0c59a4"/></linearGradient></defs><circle cx="13" cy="13" r="12" fill="url(#eg)"/><path d="M2 11C4 4 10 1 15 1.500c6 .6 10 5.500 10 10.500-1.500-4-6-6-10-5C10 8 8 12 9 16c-3-1-5.500-3-7-5z" fill="#4fd267"/><path d="M9 13c0 5 4 9 9 8.500 2.500-.3 4.500-1.500 6-3.500-2 1-5 1-7-.5s-2.500-4-1-6c-2-1.500-7-1-7 1.500z" fill="#0b4d8f"/></svg>
 <!-- wps -->
 <svg class="a" style="left:770px;top:10px" width="20" height="20" viewBox="0 0 20 20"><rect width="20" height="20" rx="2.500" fill="#2a7de1"/><path d="M3 6.500l2.700 7 2.600-7 2.600 7 2.600-7h3.800" fill="none" stroke="#fff" stroke-width="1.700" stroke-linejoin="round"/></svg>
 <div class="a" style="left:760px;top:38px;width:40px;height:2px;background:#f7d9a8"></div>
 <!-- tray -->
 <div class="a" style="left:1031px;top:9px;width:1px;height:22px;background:#6a6353"></div>
 <div class="a" style="left:1034px;top:9px;width:1px;height:22px;background:#6a6353"></div>
 <!-- battery -->
 <div class="a" style="left:1051px;top:7px;width:52px;height:24px;border-radius:4px;border:1.500px solid #cfcfcf;background:linear-gradient(90deg,#2fe06a 0,#18b455 70%,#1a1a1a 70%)"></div>
 <div class="a" style="left:1103px;top:13px;width:3px;height:12px;border-radius:0 2px 2px 0;background:#cfcfcf"></div>
 <svg class="a" style="left:1055px;top:11px" width="12" height="17" viewBox="0 0 12 17"><path d="M8 0L0.500 9.500H5L3.500 17 11.500 6.500H7z" fill="#fff"/></svg>
 <div class="t" id="batt" style="left:1071px;top:12px;font-size:14px;color:#fff;letter-spacing:-0.600px">68%</div>
 <!-- chevron -->
 <svg class="a" style="left:1116px;top:15px" width="13" height="8" viewBox="0 0 13 8"><path d="M1 7.500L6.500 1.500 12 7.500" fill="none" stroke="#fff" stroke-width="1.400"/></svg>
 <!-- wifi -->
 <svg class="a" style="left:1141px;top:13px" width="14" height="14" viewBox="0 0 16 16" fill="none" stroke="#d8d8d8" stroke-width="1.200"><path d="M1 15A14 14 0 0115 1M5 15A10 10 0 0115 5M9 15A6 6 0 0115 9"/><circle cx="14" cy="14" r="1.600" fill="#d8d8d8" stroke="none"/></svg>
 <!-- bluetooth -->
 <svg class="a" style="left:1164px;top:11px" width="13" height="17" viewBox="0 0 13 20" preserveAspectRatio="none"><ellipse cx="6.500" cy="10" rx="6.500" ry="10" fill="#1287e8"/><path d="M3.500 6.500l6 6-3 3V4.500l3 3-6 6" fill="none" stroke="#fff" stroke-width="1.200"/></svg>
 <!-- device -->
 <svg class="a" style="left:1187px;top:12px" width="17" height="17" viewBox="0 0 17 17"><rect x="1" y="0.500" width="15" height="11" fill="#8a8a8a" stroke="#555" stroke-width="1"/><path d="M1.500 14.500h5M10 14.500h5" stroke="#ddd" stroke-width="2"/><path d="M0.500 16.500h7M9.500 16.500h7" stroke="#333" stroke-width="1"/></svg>
 <div class="t" id="eng" style="left:1213px;top:14px;font-size:12px;color:#fff;transform:scaleX(0.880);transform-origin:0 50%">ENG</div>
 <div class="t" id="clk" style="left:1264px;top:5px;font-size:12px;color:#fff;letter-spacing:-0.700px">21:59</div>
 <div class="t" id="dat" style="left:1249px;top:22px;font-size:12px;color:#fff;letter-spacing:-0.350px">29-08-2020</div>
 <!-- notifications -->
 <svg class="a" style="left:1325px;top:10px" width="17" height="16" viewBox="0 0 17 16"><path d="M0.500 0.500h16v11h-4v3.500l-3.500-3.500h-8.500z" fill="#fff"/><path d="M3 3.500h11M3 6h11M3 8.500h8" stroke="#4a3c20" stroke-width="1"/></svg>
 <div class="a" style="left:1330px;top:17px;width:21px;height:21px;border-radius:11px;background:#8a551a;border:1px solid #6b4214"></div>
 <div class="t" id="n26" style="left:1334px;top:21px;font-size:12px;font-weight:bold;color:#fff;letter-spacing:-0.300px">26</div>
 <div class="a" style="left:1361px;top:0;width:1px;height:40px;background:#8a8272"></div>
</div>

</body></html>
